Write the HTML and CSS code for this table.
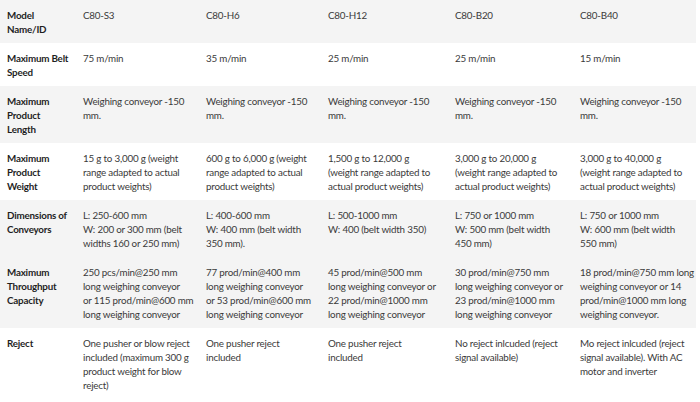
FILE: index.html
```html
<!DOCTYPE html>
<html lang="en">
<head>
<meta charset="utf-8">
<link rel="stylesheet" href="styles.css">
<title>C80 Specifications</title>
</head>
<body>
<table class="spec">
  <colgroup>
    <col class="c-label">
    <col class="c1">
    <col class="c2">
    <col class="c3">
    <col class="c4">
    <col class="c5">
  </colgroup>
  <tbody>
    <tr class="alt">
      <th>Model<br>Name/ID</th>
      <td>C80-S3</td><td>C80-H6</td><td>C80-H12</td><td>C80-B20</td><td>C80-B40</td>
    </tr>
    <tr>
      <th>Maximum Belt<br>Speed</th>
      <td>75 m/min</td><td>35 m/min</td><td>25 m/min</td><td>25 m/min</td><td>15 m/min</td>
    </tr>
    <tr class="alt">
      <th>Maximum<br>Product<br>Length</th>
      <td>Weighing conveyor -150<br>mm.</td><td>Weighing conveyor -150<br>mm.</td><td>Weighing conveyor -150<br>mm.</td><td>Weighing conveyor -150<br>mm.</td><td>Weighing conveyor -150<br>mm.</td>
    </tr>
    <tr>
      <th>Maximum<br>Product<br>Weight</th>
      <td>15 g to 3,000 g (weight<br>range adapted to actual<br>product weights)</td>
      <td>600 g to 6,000 g (weight<br>range adapted to actual<br>product weights)</td>
      <td>1,500 g to 12,000 g<br>(weight range adapted to<br>actual product weights)</td>
      <td>3,000 g to 20,000 g<br>(weight range adapted to<br>actual product weights)</td>
      <td>3,000 g to 40,000 g<br>(weight range adapted to<br>actual product weights)</td>
    </tr>
    <tr class="alt">
      <th>Dimensions of<br>Conveyors</th>
      <td>L: 250-600 mm<br>W: 200 or 300 mm (belt<br>widths 160 or 250 mm)</td>
      <td>L: 400-600 mm<br>W: 400 mm (belt width<br>350 mm).</td>
      <td>L: 500-1000 mm<br>W: 400 (belt width 350)</td>
      <td>L: 750 or 1000 mm<br>W: 500 mm (belt width<br>450 mm)</td>
      <td>L: 750 or 1000 mm<br>W: 600 mm (belt width<br>550 mm)</td>
    </tr>
    <tr class="alt">
      <th>Maximum<br>Throughput<br>Capacity</th>
      <td>250 pcs/min@250 mm<br>long weighing conveyor<br>or 115 prod/min@600 mm<br>long weighing conveyor</td>
      <td>77 prod/min@400 mm<br>long weighing conveyor<br>or 53 prod/min@600 mm<br>long weighing conveyor</td>
      <td>45 prod/min@500 mm<br>long weighing conveyor or<br>22 prod/min@1000 mm<br>long weighing conveyor</td>
      <td>30 prod/min@750 mm<br>long weighing conveyor or<br>23 prod/min@1000 mm<br>long weighing conveyor</td>
      <td>18 prod/min@750 mm long<br>weighing conveyor or 14<br>prod/min@1000 mm long<br>weighing conveyor.</td>
    </tr>
    <tr>
      <th>Reject</th>
      <td>One pusher or blow reject<br>included (maximum 300 g<br>product weight for blow<br>reject)</td>
      <td>One pusher reject<br>included</td>
      <td>One pusher reject<br>included</td>
      <td>No reject inlcuded (reject<br>signal available)</td>
      <td>Mo reject inlcuded (reject<br>signal available). With AC<br>motor and inverter</td>
    </tr>
  </tbody>
</table>
</body>
</html>
```
FILE: styles.css
```css
html, body {
  margin: 0;
  padding: 0;
  background: #ffffff;
}
body {
  font-family: Lato, "Liberation Sans", sans-serif;
  font-size: 9.8px;
  letter-spacing: -0.2px;
  color: #3a3a3a;
}
.spec {
  width: 696px;
  table-layout: fixed;
  border-collapse: collapse;
  border-spacing: 0;
}
.c-label { width: 76px; }
.c1 { width: 123px; }
.c2 { width: 122px; }
.c3 { width: 127px; }
.c4 { width: 125px; }
.c5 { width: 123px; }
.spec th,
.spec td {
  text-align: left;
  vertical-align: top;
  line-height: 14px;
  padding: 8px 2px 7px 7px;
  white-space: nowrap;
}
.spec th {
  font-weight: 700;
  color: #1f1f1f;
}
.spec tr.alt {
  background: #f4f4f4;
}
```
